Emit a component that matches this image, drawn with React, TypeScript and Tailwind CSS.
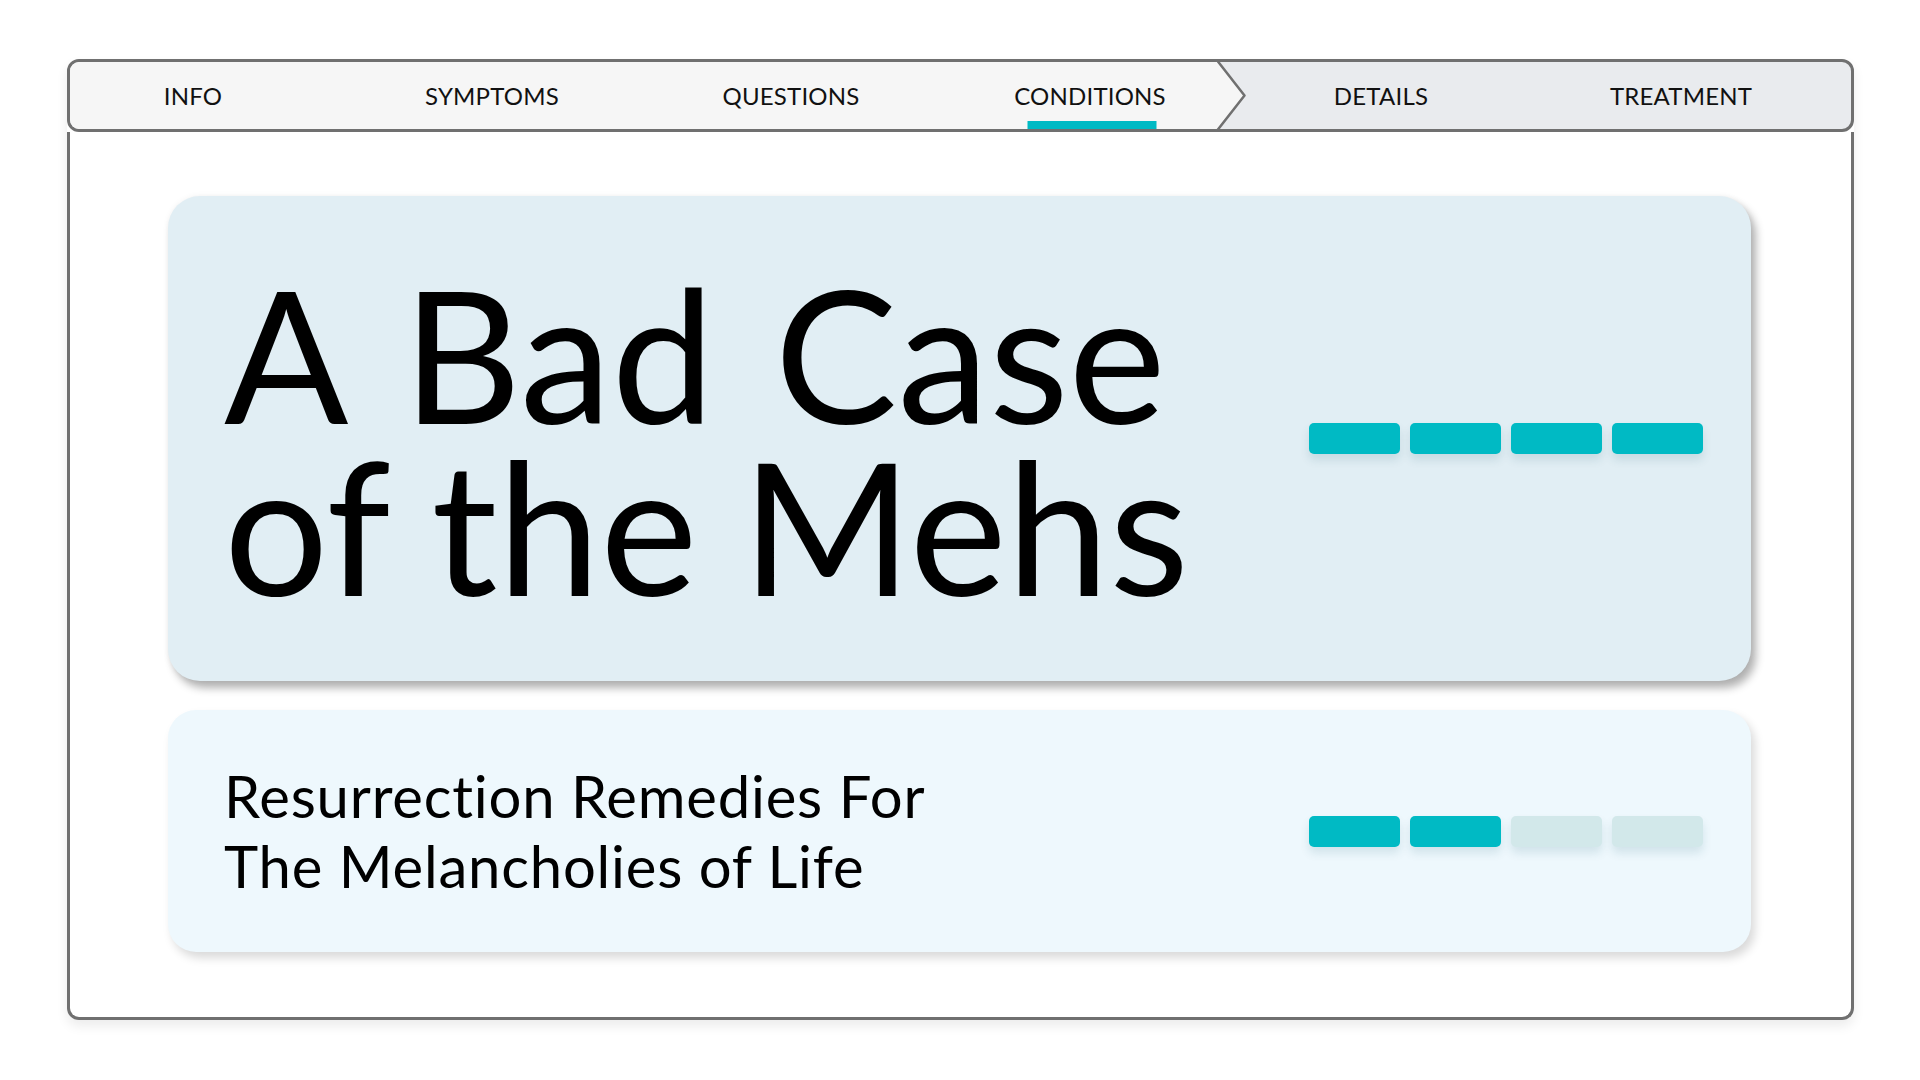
import type { ReactNode } from 'react';

const TEAL = 'bg-[#00bac4]';

const Tab = ({ label, active }: { label: string; active?: boolean }) => (
  <div className="relative flex h-full w-[246px] items-center justify-center">
    <span className="text-[24px] tracking-[0.2px] text-[#111]">{label}</span>
    {active && <div className={`absolute bottom-0 left-1/2 ml-[2px] h-[8px] w-[129px] -translate-x-1/2 ${TEAL}`} />}
  </div>
);

const Progress = ({ filled }: { filled: number }) => (
  <div className="flex gap-[10px]">
    {[0, 1, 2, 3].map(i => (
      <div
        key={i}
        className={`h-[31px] w-[91px] rounded-[5px] shadow-[0_6px_10px_rgba(0,80,100,0.12)] ${
          i < filled ? TEAL : 'bg-[#d2e8ea]'
        }`}
      />
    ))}
  </div>
);

const Card = ({ className, children, filled }: { className: string; children: ReactNode; filled: number }) => (
  <div className={`flex items-center justify-between pl-[56px] pr-[48px] ${className}`}>
    {children}
    <Progress filled={filled} />
  </div>
);

export default function App() {
  return (
    <div className="h-[1080px] w-full bg-white pl-[67px] pt-[59px]" style={{ fontFamily: 'Lato, "Noto Sans", sans-serif' }}>
      <div className="flex h-[961px] w-[1787px] flex-col rounded-[12px] shadow-[0_6px_12px_rgba(0,0,0,0.08)]">
        {/* Tab bar */}
        <div className="flex h-[73px] overflow-hidden rounded-[12px] border-[3px] border-[#707070] bg-[#e9ebee]">
          <div className="flex h-full w-[1146px] gap-[53px] bg-[#f6f6f6]">
            <Tab label="INFO" />
            <Tab label="SYMPTOMS" />
            <Tab label="QUESTIONS" />
            <Tab label="CONDITIONS" active />
          </div>
          <svg width="30" height="67" viewBox="0 0 30 67" className="shrink-0">
            <polygon points="0,0 1,0 28.5,33.5 1,67 0,67" fill="#f6f6f6" />
            <polyline points="0,-3 28.5,33.5 0,70" fill="none" stroke="#707070" strokeWidth="2.5" strokeLinejoin="round" />
          </svg>
          <div className="flex h-full flex-1 gap-[54px] pl-[12px]">
            <Tab label="DETAILS" />
            <Tab label="TREATMENT" />
          </div>
        </div>

        {/* Body */}
        <div className="flex flex-1 flex-col gap-[29px] rounded-b-[12px] border-x-[3px] border-b-[3px] border-[#707070] pb-[65px] pl-[98px] pr-[100px] pt-[64px]">
          <Card
            filled={4}
            className="h-[485px] w-[1583px] rounded-[32px] bg-[#e1eef4] shadow-[5px_7px_8px_rgba(0,0,0,0.3),0_0_6px_rgba(0,0,0,0.05)]"
          >
            <h1 className="text-[184px] leading-[172px] tracking-[0px] text-black">
              <span className="block [word-spacing:13px]">A Bad Case</span>
              <span className="block [word-spacing:-3px]">of the Mehs</span>
            </h1>
          </Card>
          <Card
            filled={2}
            className="h-[242px] w-[1583px] rounded-[28px] bg-[#eef8fd] shadow-[4px_6px_10px_rgba(0,0,0,0.15)]"
          >
            <p className="text-[58px] leading-[70px] tracking-[0.8px] text-black">
              Resurrection Remedies For
              <br />
              The Melancholies of Life
            </p>
          </Card>
        </div>
      </div>
    </div>
  );
}
